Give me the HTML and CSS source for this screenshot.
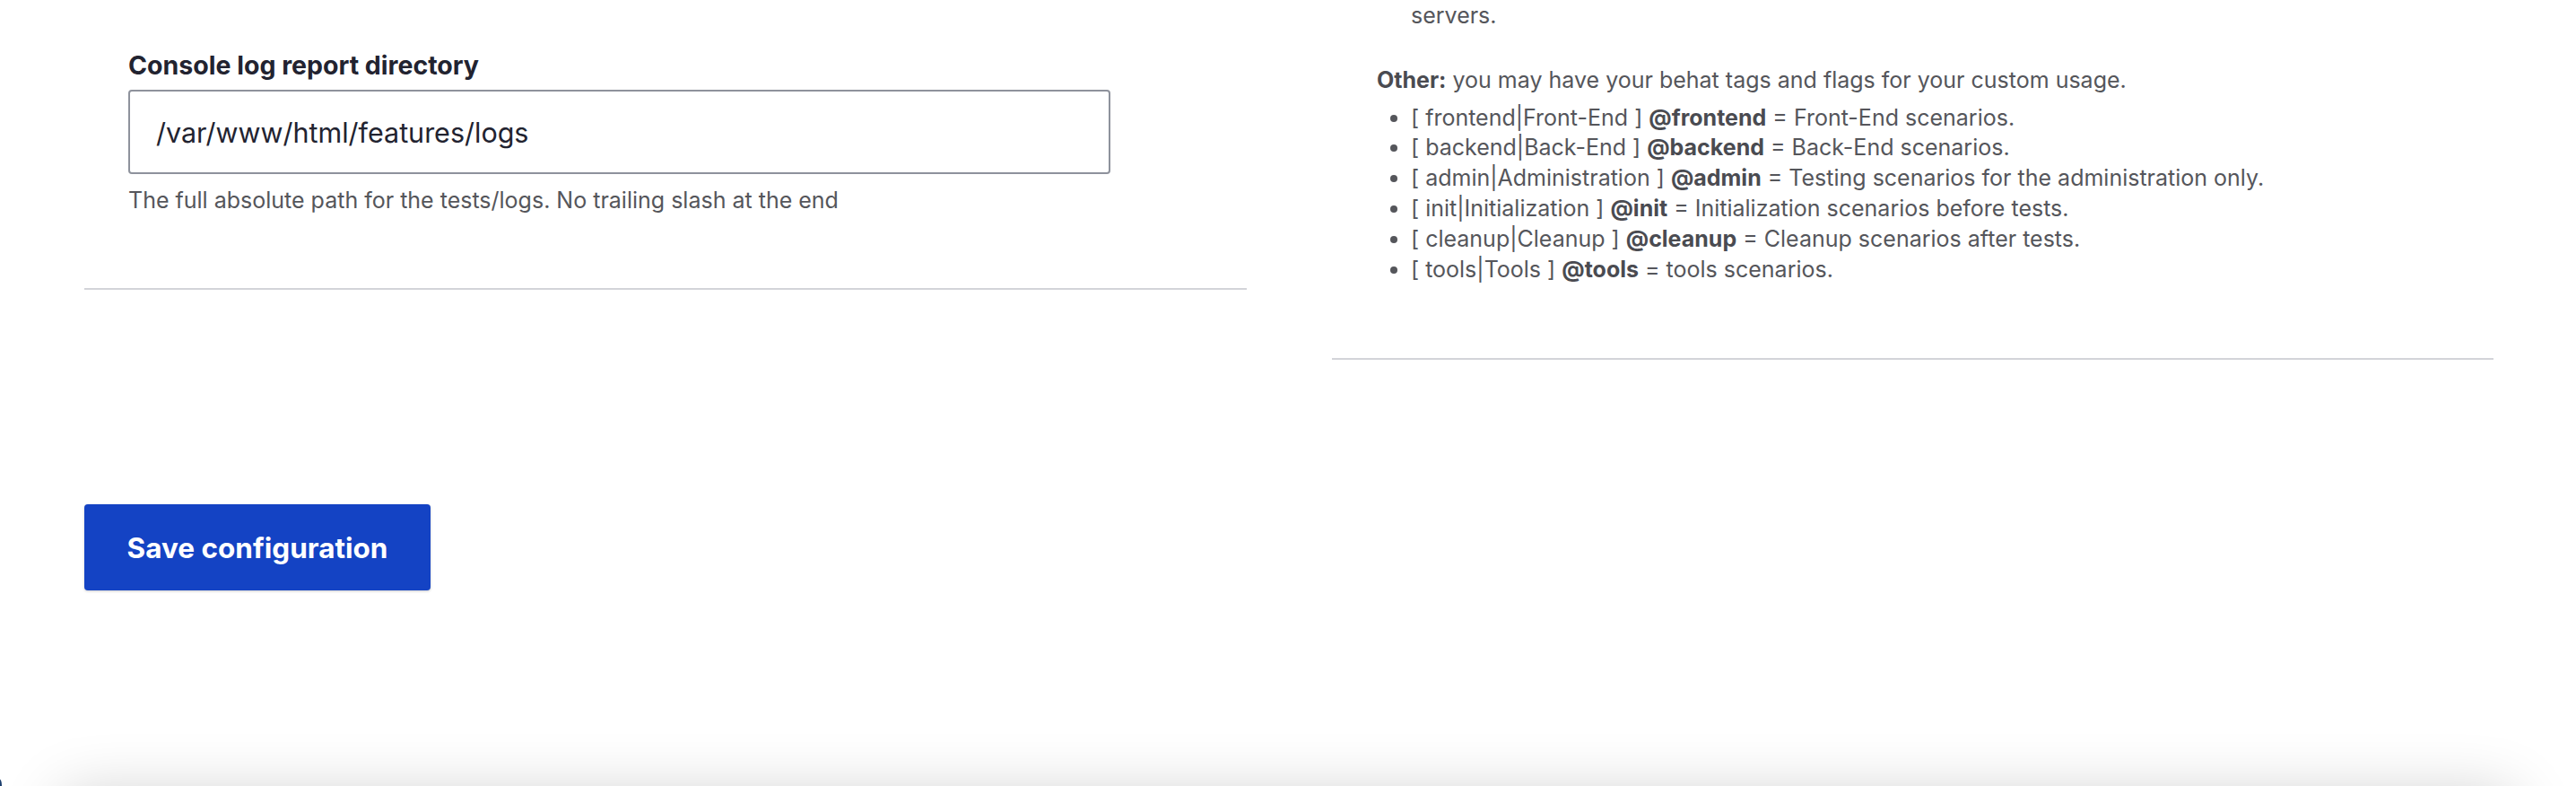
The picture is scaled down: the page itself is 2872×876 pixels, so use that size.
FILE: index.html
```html
<!DOCTYPE html>
<html lang="en">
<head>
<meta charset="utf-8">
<title>Configuration</title>
<link rel="stylesheet" href="styles.css">
</head>
<body>
<div class="page">
  <div class="columns">
    <div class="col col-left">
      <div class="form-item">
        <label class="label" for="logdir">Console log report directory</label>
        <input class="text-input" id="logdir" type="text" value="/var/www/html/features/logs">
        <div class="description">The full absolute path for the tests/logs. No trailing slash at the end</div>
      </div>
    </div>
    <div class="col col-right">
      <ul class="tags tags-prev">
        <li class="cont">servers.</li>
      </ul>
      <p class="para"><strong>Other:</strong> you may have your behat tags and flags for your custom usage.</p>
      <ul class="tags">
        <li>[ frontend|Front-End ] <strong>@frontend</strong> = Front-End scenarios.</li>
        <li>[ backend|Back-End ] <strong>@backend</strong> = Back-End scenarios.</li>
        <li>[ admin|Administration ] <strong>@admin</strong> = Testing scenarios for the administration only.</li>
        <li>[ init|Initialization ] <strong>@init</strong> = Initialization scenarios before tests.</li>
        <li>[ cleanup|Cleanup ] <strong>@cleanup</strong> = Cleanup scenarios after tests.</li>
        <li>[ tools|Tools ] <strong>@tools</strong> = tools scenarios.</li>
      </ul>
    </div>
  </div>
  <div class="actions">
    <button class="btn-primary" type="button">Save configuration</button>
  </div>
</div>
<div class="sticky-shadow"></div>
<div class="corner-mark"></div>
</body>
</html>
```

FILE: styles.css
```css
html, body {
  margin: 0;
  padding: 0;
  background: #ffffff;
}

body {
  font-family: Inter, "Noto Sans", "Liberation Sans", sans-serif;
  color: #55565b;
  overflow: hidden;
  height: 876px;
}

.page {
  padding-left: 94px;
}

.columns {
  display: flex;
  align-items: flex-start;
  gap: 95px;
}

.col-left {
  width: 1296px;
  border-bottom: 2px solid #d3d4d9;
  padding: 55px 0 81px 49px;
  box-sizing: border-box;
}

.col-right {
  width: 1295px;
  border-bottom: 2px solid #d3d4d9;
  padding: 1px 0 82px 50px;
  box-sizing: border-box;
}

.form-item {
  display: flex;
  flex-direction: column;
  align-items: flex-start;
}

.label {
  font-size: 28.5px;
  line-height: 36px;
  font-weight: 700;
  color: #222330;
}

.text-input {
  margin-top: 9px;
  width: 1095px;
  height: 94px;
  box-sizing: border-box;
  border: 2px solid #8e929c;
  border-radius: 4px;
  padding: 0 29px;
  font-family: inherit;
  font-size: 30.5px;
  color: #222330;
  background: #fff;
  outline: none;
}

.description {
  margin-top: 12px;
  font-size: 25px;
  line-height: 34px;
  color: #55565b;
}

.tags {
  margin: 0;
  padding-left: 38px;
  font-size: 25px;
  line-height: 33.8px;
}

.tags-prev {
  list-style: none;
}

.para {
  margin: 38px 0 8px;
  font-size: 25px;
  line-height: 33.8px;
}

.tags strong,
.para strong {
  font-weight: 700;
  color: #4a4b51;
}

.actions {
  margin-top: 161px;
}

.btn-primary {
  width: 386px;
  height: 96px;
  border: 0;
  border-radius: 4px;
  background: #1443c4;
  color: #ffffff;
  font-family: inherit;
  font-size: 31.5px;
  font-weight: 700;
  box-shadow: 0 1px 3px rgba(0, 0, 0, 0.2);
  cursor: pointer;
}

.sticky-shadow {
  position: fixed;
  left: 70px;
  right: 70px;
  bottom: -110px;
  height: 100px;
  background: #fff;
  box-shadow: 0 0 70px rgba(0, 0, 0, 0.2);
}

.corner-mark {
  position: fixed;
  left: -4px;
  bottom: -6px;
  width: 6px;
  height: 14px;
  border-radius: 50%;
  background: #1d3f6e;
}
```
